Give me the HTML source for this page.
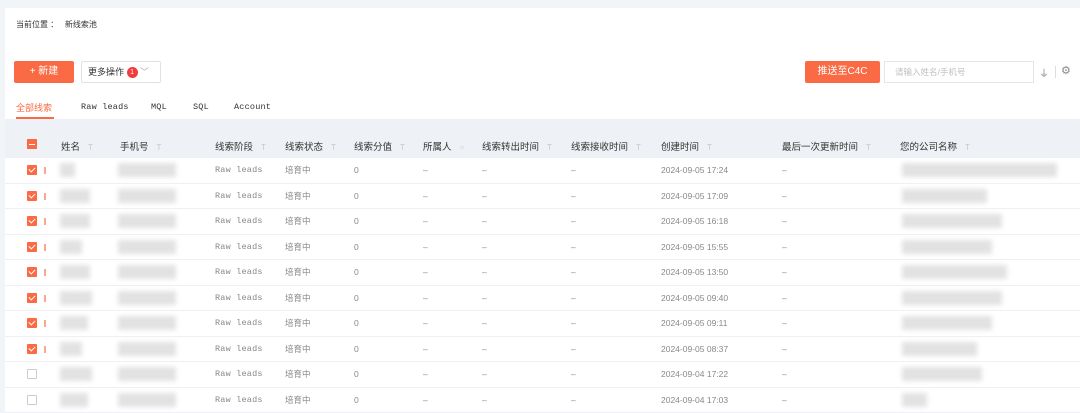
<!DOCTYPE html>
<html><head><meta charset="utf-8">
<style>
*{box-sizing:border-box;margin:0;padding:0}
body{width:1080px;height:413px;overflow:hidden;background:#f2f5f8;font-family:"Liberation Sans","Noto Sans CJK SC",sans-serif;position:relative;color:#333}
.card{position:absolute;left:5px;top:8px;width:1075px;height:405px;background:#fff}
.abs{position:absolute;white-space:nowrap}
.f9{font-size:9px}
.btn{position:absolute;background:#fa6b45;color:#fff;font-size:10px;text-align:center;border-radius:2px}
.hdr{position:absolute;left:5px;top:119px;width:1075px;height:39px;background:#eef2f6}
.hl{position:absolute;top:139px;font-size:9.5px;color:#333}
.ft{color:#c8c8c8;font-size:8px;margin-left:8px}
.row{position:absolute;left:5px;width:1075px;height:25.5px;border-bottom:1px solid #eef0f3}
.c{position:absolute;font-size:8.5px;color:#888;top:7px;white-space:nowrap;line-height:11px}
.cb{position:absolute;left:22px;top:7px;width:10px;height:10px;background:#fa6b45;border-radius:1px}
.cb:after{content:"";position:absolute;left:3px;top:1px;width:3px;height:5px;border:solid #fff;border-width:0 1.3px 1.3px 0;transform:rotate(45deg)}
.cbe{position:absolute;left:22px;top:7px;width:10px;height:10px;border:1px solid #ccc;border-radius:1px}
.dot{position:absolute;left:39px;top:9px;width:1.5px;height:7px;background:#fa6b45;opacity:.6}
.blur{position:absolute;background:#e2e2e2;filter:blur(2.5px);top:5px;height:14px}
.mono{font-family:"Liberation Mono",monospace;letter-spacing:.2px}
</style></head><body>
<div class="card"></div>
<div class="abs f9" style="left:16px;top:19px;font-size:8px">当前位置 ：&nbsp;&nbsp; 新线索池</div>
<div class="btn" style="left:14px;top:61px;width:60px;height:22px;line-height:22px">+ 新建</div>
<div class="abs" style="left:81px;top:61px;width:80px;height:22px;border:1px solid #e2e2e2;border-radius:2px;font-size:9px;line-height:20px;padding-left:6px">更多操作 <span style="display:inline-block;width:11px;height:11px;border-radius:50%;background:#f03c3c;color:#fff;font-size:7px;line-height:11px;text-align:center;vertical-align:middle">1</span> <span style="color:#aaa">﹀</span></div>
<div class="btn" style="left:805px;top:61px;width:75px;height:22px;line-height:22px">推送至C4C</div>
<div class="abs" style="left:884px;top:61px;width:150px;height:22px;border:1px solid #e6e6e6;font-size:8.5px;color:#c0c0c0;line-height:20px;padding-left:10px">请输入姓名/手机号</div>
<div class="abs" style="left:1039px;top:65px;font-size:10px;color:#888">⏚</div>
<div class="abs" style="left:1055px;top:66px;width:1px;height:12px;background:#ddd"></div>
<div class="abs" style="left:1061px;top:64px;font-size:11px;color:#888">⚙</div>
<div class="abs" style="left:16px;top:101px;font-size:9px;color:#fa6b45">全部线索</div>
<div class="abs" style="left:16px;top:117px;width:38px;height:2px;background:#fa6b45"></div>
<div class="abs mono" style="left:81px;top:102px;font-size:8.5px">Raw leads</div>
<div class="abs mono" style="left:151px;top:102px;font-size:8.5px">MQL</div>
<div class="abs mono" style="left:193px;top:102px;font-size:8.5px">SQL</div>
<div class="abs mono" style="left:234px;top:102px;font-size:8.5px">Account</div>
<div class="hdr"></div>
<div class="abs" style="left:27px;top:139px;width:10px;height:10px;background:#fa6b45"><div style="position:absolute;left:2px;top:4.5px;width:6px;height:1.3px;background:#fff"></div></div>
<div class="hl" style="left:61px">姓名<span class="ft">T</span></div>
<div class="hl" style="left:120px">手机号<span class="ft">T</span></div>
<div class="hl" style="left:215px">线索阶段<span class="ft">T</span></div>
<div class="hl" style="left:285px">线索状态<span class="ft">T</span></div>
<div class="hl" style="left:354px">线索分值<span class="ft">T</span></div>
<div class="hl" style="left:423px">所属人<span class="ft">○</span></div>
<div class="hl" style="left:482px">线索转出时间<span class="ft">T</span></div>
<div class="hl" style="left:571px">线索接收时间<span class="ft">T</span></div>
<div class="hl" style="left:661px">创建时间<span class="ft">T</span></div>
<div class="hl" style="left:782px">最后一次更新时间<span class="ft">T</span></div>
<div class="hl" style="left:900px">您的公司名称<span class="ft">T</span></div>
<div id="rows"></div>
<script>
var t=["2024-09-05 17:24","2024-09-05 17:09","2024-09-05 16:18","2024-09-05 15:55","2024-09-05 13:50","2024-09-05 09:40","2024-09-05 09:11","2024-09-05 08:37","2024-09-04 17:22","2024-09-04 17:03"];
var nw=[15,30,30,22,30,32,28,22,32,28],cw=[155,85,100,90,105,100,90,75,80,25];
var h="";
for(var i=0;i<10;i++){var y=158+i*25.5;
h+='<div class="row" style="top:'+y+'px">'+(i<8?'<div class="cb"></div><div class="dot"></div>':'<div class="cbe"></div>')+
'<div class="blur" style="left:55px;width:'+nw[i]+'px"></div><div class="blur" style="left:113px;width:58px"></div>'+
'<div class="c mono" style="left:210px">Raw leads</div><div class="c" style="left:280px">培育中</div><div class="c" style="left:349px">0</div>'+
'<div class="c" style="left:418px">–</div><div class="c" style="left:477px">–</div><div class="c" style="left:566px">–</div>'+
'<div class="c" style="left:656px">'+t[i]+'</div><div class="c" style="left:777px">–</div>'+
'<div class="blur" style="left:897px;width:'+cw[i]+'px"></div></div>';}
document.getElementById("rows").innerHTML=h;
</script>
</body></html>
